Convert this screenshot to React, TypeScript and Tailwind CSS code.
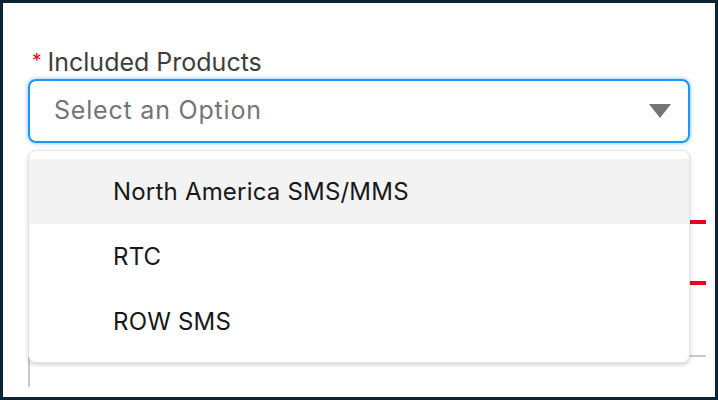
const options = ['North America SMS/MMS', 'RTC', 'ROW SMS'];

const App = () => {
    return (
        <div className="w-[718px] h-[400px] bg-[#0b2537] p-[3px] font-['Inter',sans-serif]">
            <div className="relative h-full bg-white pl-[25px] pr-[9px] pt-[43px] overflow-hidden">
                <label className="flex items-start text-[25px] leading-[32px] text-[#3e3e3c]">
                    <span className="text-[#ea001e] text-[19px] leading-[26px] ml-[4px] mr-[6px] mt-[2px]">*</span>
                    Included Products
                </label>
                <div className="mt-[1px] w-[662px] h-[64px] flex items-center justify-between rounded-[8px] border-2 border-[#1b96ff] shadow-[0_0_4px_#7ab8f5] pl-[24px] pr-[17px]">
                    <span className="text-[25px] tracking-[0.8px] text-[#747474]">Select an Option</span>
                    <svg width="22" height="14" viewBox="0 0 22 14">
                        <polygon points="0,0 22,0 11,14" fill="#747474" />
                    </svg>
                </div>

                {/* fields behind the open list */}
                <div className="mt-[77px] h-[4px] bg-[#ea001e]" />
                <div className="mt-[57px] h-[4px] bg-[#ea001e]" />
                <div className="mt-[70px] h-[32px] border-t-2 border-l-2 border-[#c9c9c9]" />

                <div className="absolute top-[147px] left-[25px] w-[662px] h-[213px] rounded-[8px] border border-[#e5e5e5] bg-white shadow-[0_2px_4px_rgba(0,0,0,0.18)] pt-[8px]">
                    {options.map((opt, index) => (
                        <div
                            key={index}
                            className={`h-[65px] flex items-center pl-[84px] text-[24px] tracking-[0.2px] text-[#181818] ${index === 0 ? 'bg-[#f3f3f3]' : ''}`}
                        >
                            {opt}
                        </div>
                    ))}
                </div>
            </div>
        </div>
    );
};

export default App;
